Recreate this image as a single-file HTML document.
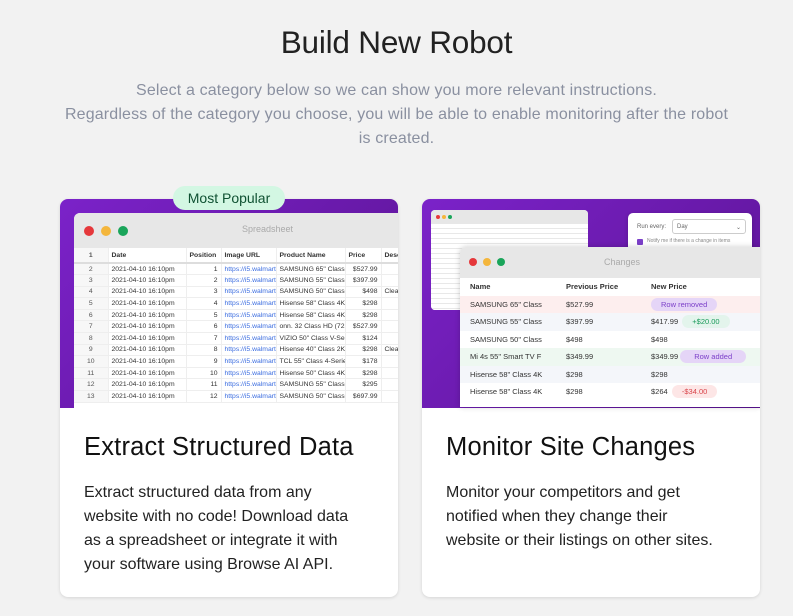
<!DOCTYPE html>
<html><head><meta charset="utf-8"><style>
*{box-sizing:border-box;margin:0;padding:0}
body{width:793px;height:616px;background:#f2f2f2;font-family:"Liberation Sans",sans-serif;position:relative;overflow:hidden}
.abs{position:absolute}
h1{position:absolute;top:24px;left:0;width:793px;text-align:center;font-weight:300;font-size:31.5px;color:#222;letter-spacing:-0.2px}
.sub{position:absolute;top:79px;left:40px;width:713px;text-align:center;font-size:16px;line-height:24px;color:#8a90a0;letter-spacing:0.15px}
.card{position:absolute;top:199px;width:338px;height:398px;background:#fff;border-radius:8px;box-shadow:0 1px 3px rgba(0,0,0,.12);overflow:hidden}
.img{position:absolute;left:0;top:0;width:338px;height:209px;background:linear-gradient(135deg,#7b22c9,#5a1391);}
.ct{position:absolute;left:24px;top:234px;font-size:25.5px;color:#111;letter-spacing:0.2px}
.cb{position:absolute;left:24px;top:282px;font-size:16px;line-height:24px;color:#222;width:310px;white-space:nowrap}
.win{position:absolute;background:#fff;overflow:hidden}
.bar{background:#e7e7e7;position:relative}
.dot{position:absolute;border-radius:50%}
table{border-collapse:collapse}
.ss td{font-size:6.8px;color:#333;height:11.6px;border-bottom:1px solid #eee;border-right:1px solid #eee;white-space:nowrap;overflow:hidden;padding:0 3px}
.ss td.n{text-align:center;background:#f7f7f7;color:#555}
.ss td.r{text-align:right}
.ss td.u{color:#3b6de0}
.ss tr.h td{font-weight:bold;height:15px;border-bottom:2px solid #ddd}
.ch td{font-size:7.5px;color:#333;height:17.5px;padding:0 10px;white-space:nowrap}
.pill{display:inline-block;border-radius:8px;padding:2px 10px;font-size:7.5px}
</style></head><body>
<h1>Build New Robot</h1>
<div class="sub">Select a category below so we can show you more relevant instructions.<br>Regardless of the category you choose, you will be able to enable monitoring after the robot<br>is created.</div>

<div class="card" style="left:60px">
 <div class="img">
  <div class="win" style="left:14px;top:14px;width:330px;height:200px;border-radius:6px 0 0 0">
   <div class="bar" style="height:35px">
    <div class="dot" style="left:10px;top:13px;width:10px;height:10px;background:#e5383b"></div>
    <div class="dot" style="left:27px;top:13px;width:10px;height:10px;background:#f4b63c"></div>
    <div class="dot" style="left:44px;top:13px;width:10px;height:10px;background:#1aa55a"></div>
    <div class="abs" style="left:168px;top:11px;font-size:9px;color:#aaa">Spreadsheet</div>
   </div>
   <table class="ss" style="table-layout:fixed;width:340px">
    <colgroup><col style="width:34px"><col style="width:78px"><col style="width:35px"><col style="width:55px"><col style="width:69px"><col style="width:36px"><col style="width:33px"></colgroup>
    <tr class="h"><td class="n">1</td><td>Date</td><td>Position</td><td>Image URL</td><td>Product Name</td><td>Price</td><td>Desc</td></tr>
    <tr><td class="n">2</td><td>2021-04-10 16:10pm</td><td class="r">1</td><td class="u">https://i5.walmarti</td><td>SAMSUNG 65" Class</td><td class="r">$527.99</td><td></td></tr>
    <tr><td class="n">3</td><td>2021-04-10 16:10pm</td><td class="r">2</td><td class="u">https://i5.walmarti</td><td>SAMSUNG 55" Class</td><td class="r">$397.99</td><td></td></tr>
    <tr><td class="n">4</td><td>2021-04-10 16:10pm</td><td class="r">3</td><td class="u">https://i5.walmarti</td><td>SAMSUNG 50" Class</td><td class="r">$498</td><td>Clea</td></tr>
    <tr><td class="n">5</td><td>2021-04-10 16:10pm</td><td class="r">4</td><td class="u">https://i5.walmarti</td><td>Hisense 58" Class 4K</td><td class="r">$298</td><td></td></tr>
    <tr><td class="n">6</td><td>2021-04-10 16:10pm</td><td class="r">5</td><td class="u">https://i5.walmarti</td><td>Hisense 58" Class 4K</td><td class="r">$298</td><td></td></tr>
    <tr><td class="n">7</td><td>2021-04-10 16:10pm</td><td class="r">6</td><td class="u">https://i5.walmarti</td><td>onn. 32 Class HD (72</td><td class="r">$527.99</td><td></td></tr>
    <tr><td class="n">8</td><td>2021-04-10 16:10pm</td><td class="r">7</td><td class="u">https://i5.walmarti</td><td>VIZIO 50" Class V-Ser</td><td class="r">$124</td><td></td></tr>
    <tr><td class="n">9</td><td>2021-04-10 16:10pm</td><td class="r">8</td><td class="u">https://i5.walmarti</td><td>Hisense 40" Class 2K</td><td class="r">$298</td><td>Clea</td></tr>
    <tr><td class="n">10</td><td>2021-04-10 16:10pm</td><td class="r">9</td><td class="u">https://i5.walmarti</td><td>TCL 55" Class 4-Serie</td><td class="r">$178</td><td></td></tr>
    <tr><td class="n">11</td><td>2021-04-10 16:10pm</td><td class="r">10</td><td class="u">https://i5.walmarti</td><td>Hisense 50" Class 4K</td><td class="r">$298</td><td></td></tr>
    <tr><td class="n">12</td><td>2021-04-10 16:10pm</td><td class="r">11</td><td class="u">https://i5.walmarti</td><td>SAMSUNG 55" Class</td><td class="r">$295</td><td></td></tr>
    <tr><td class="n">13</td><td>2021-04-10 16:10pm</td><td class="r">12</td><td class="u">https://i5.walmarti</td><td>SAMSUNG 50" Class</td><td class="r">$697.99</td><td></td></tr>
   </table>
  </div>
 </div>
 <div class="ct">Extract Structured Data</div>
 <div class="cb">Extract structured data from any<br>website with no code! Download data<br>as a spreadsheet or integrate it with<br>your software using Browse AI API.</div>
</div>
<div class="abs" style="left:173px;top:186px;width:112px;height:24px;border-radius:12px;background:#d3f7e3;color:#0f5132;font-size:14px;text-align:center;line-height:24px">Most Popular</div>

<div class="card" style="left:422px">
 <div class="img">
  <div class="win" style="left:9px;top:11px;width:157px;height:100px;border-radius:4px">
   <div class="bar" style="height:14px">
    <div class="dot" style="left:5px;top:5px;width:4px;height:4px;background:#e5383b"></div>
    <div class="dot" style="left:11px;top:5px;width:4px;height:4px;background:#f4b63c"></div>
    <div class="dot" style="left:17px;top:5px;width:4px;height:4px;background:#1aa55a"></div>
   </div>
   <div style="height:86px;background:repeating-linear-gradient(#fff 0 4px,#e8e8e8 4px 5px)"></div>
  </div>
  <div class="win" style="left:206px;top:14px;width:124px;height:42px;border-radius:5px;box-shadow:0 1px 4px rgba(0,0,0,.2)">
   <div class="abs" style="left:9px;top:11px;font-size:6px;color:#666">Run every:</div>
   <div class="abs" style="left:44px;top:6px;width:74px;height:15px;border:1px solid #ccc;border-radius:3px;font-size:6px;color:#666;padding:4px 4px">Day<span style="float:right">⌄</span></div>
   <div class="abs" style="left:9px;top:26px;width:6px;height:6px;background:#7b3fc9;border-radius:1px"></div>
   <div class="abs" style="left:19px;top:25px;font-size:5px;color:#888">Notify me if there is a change in items</div>
  </div>
  <div class="win" style="left:38px;top:48px;width:300px;height:160px;border-radius:6px 0 0 0;box-shadow:0 0 6px rgba(0,0,0,.2)">
   <div class="bar" style="height:31px">
    <div class="dot" style="left:9px;top:11px;width:8px;height:8px;background:#e5383b"></div>
    <div class="dot" style="left:23px;top:11px;width:8px;height:8px;background:#f4b63c"></div>
    <div class="dot" style="left:37px;top:11px;width:8px;height:8px;background:#1aa55a"></div>
    <div class="abs" style="left:144px;top:10px;font-size:9px;color:#aaa">Changes</div>
   </div>
   <table class="ch" style="width:300px;table-layout:fixed">
    <colgroup><col style="width:96px"><col style="width:85px"><col></colgroup>
    <tr><td style="font-weight:bold">Name</td><td style="font-weight:bold">Previous Price</td><td style="font-weight:bold">New Price</td></tr>
    <tr style="background:#fdeeee"><td>SAMSUNG 65" Class</td><td>$527.99</td><td><span class="pill" style="background:#e5d5f7;color:#7b3fc9">Row removed</span></td></tr>
    <tr style="background:#f4f6fa"><td>SAMSUNG 55" Class</td><td>$397.99</td><td>$417.99 &nbsp;<span class="pill" style="background:#e3f4ec;color:#1a9a5a">+$20.00</span></td></tr>
    <tr><td>SAMSUNG 50" Class</td><td>$498</td><td>$498</td></tr>
    <tr style="background:#eef8f1"><td>Mi 4s 55" Smart TV F</td><td>$349.99</td><td>$349.99 <span class="pill" style="background:#e5d5f7;color:#7b3fc9;padding:2px 14px">Row added</span></td></tr>
    <tr style="background:#f4f6fa"><td>Hisense 58" Class 4K</td><td>$298</td><td>$298</td></tr>
    <tr><td>Hisense 58" Class 4K</td><td>$298</td><td>$264 &nbsp;<span class="pill" style="background:#fde6e6;color:#d9444a">-$34.00</span></td></tr>
   </table>
  </div>
 </div>
 <div class="ct">Monitor Site Changes</div>
 <div class="cb">Monitor your competitors and get<br>notified when they change their<br>website or their listings on other sites.</div>
</div>
</body></html>
